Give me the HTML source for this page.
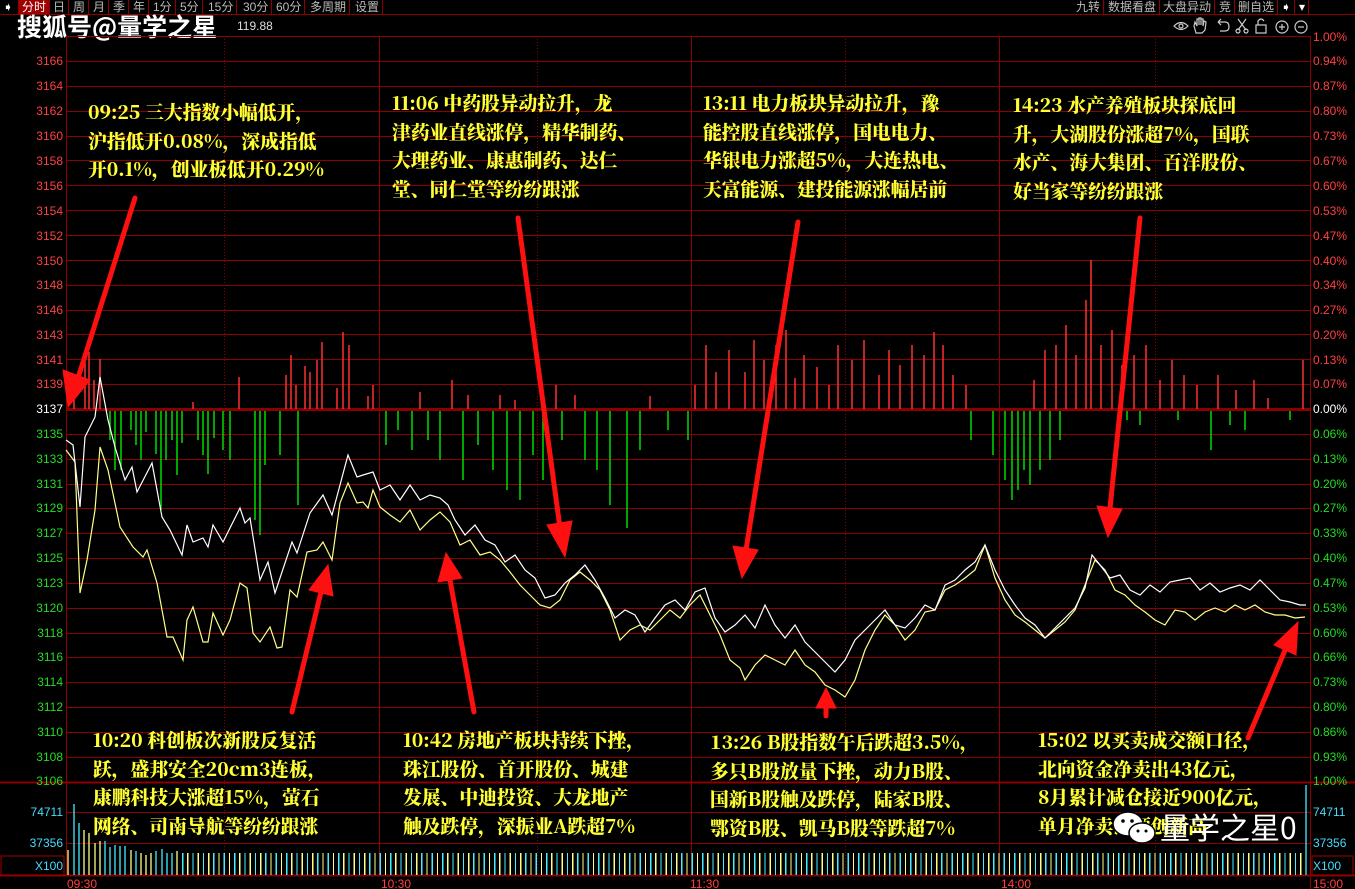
<!DOCTYPE html>
<html><head><meta charset="utf-8"><style>
html,body{margin:0;padding:0;background:#000;width:1355px;height:889px;overflow:hidden}
body{position:relative;font-family:"Liberation Sans","Noto Sans CJK SC",sans-serif}
.tb{position:absolute;top:0;left:0;width:1355px;height:14px;border-bottom:1px solid #8b0000}
.tb span{position:absolute;top:0;height:14px;font-size:12px;line-height:14px;color:#bbb;border-right:1px solid #8b0000;padding:0 3px}
.ann{position:absolute;color:#ffff33;font-family:"Noto Serif CJK SC","Liberation Serif",serif;font-weight:900;font-size:18.8px;line-height:28.5px;white-space:nowrap}
.ly{position:absolute;right:1292px;font-size:12px;line-height:12px;text-align:right}
.ry{position:absolute;left:1313px;font-size:12px;line-height:12px}
</style></head><body>
<div class="tb">
<span style="left:0;width:12px;color:#fff">➧</span>
<span style="left:19px;background:#a00000;color:#fff">分时</span>
<span style="left:50px">日</span><span style="left:70px">周</span><span style="left:90px">月</span><span style="left:110px">季</span><span style="left:130px">年</span><span style="left:150px">1分</span><span style="left:177px">5分</span><span style="left:205px">15分</span><span style="left:240px">30分</span><span style="left:273px">60分</span><span style="left:307px">多周期</span><span style="left:352px">设置</span>
<span style="left:1073px">九转</span><span style="left:1105px">数据看盘</span><span style="left:1160px">大盘异动</span><span style="left:1216px">竞</span><span style="left:1235px">删自选</span><span style="left:1278px;color:#fff">➧</span><span style="left:1296px;color:#fff">▾</span>
</div>
<div style="position:absolute;left:17px;top:12px;color:#fff;font-size:25px;font-weight:bold;line-height:28px;font-family:'Noto Sans CJK SC',sans-serif">搜狐号@量学之星</div>
<div style="position:absolute;left:237px;top:19px;color:#ddd;font-size:12px">119.88</div>
<svg style="position:absolute;left:0;top:0" width="1355" height="889">
<g stroke="#8b0000" stroke-width="1">
<line x1="66" y1="36.5" x2="1310" y2="36.5"/>
<line x1="66" y1="61.5" x2="1310" y2="61.5"/><line x1="66" y1="86.5" x2="1310" y2="86.5"/><line x1="66" y1="111.5" x2="1310" y2="111.5"/><line x1="66" y1="136.5" x2="1310" y2="136.5"/><line x1="66" y1="160.5" x2="1310" y2="160.5"/><line x1="66" y1="185.5" x2="1310" y2="185.5"/><line x1="66" y1="210.5" x2="1310" y2="210.5"/><line x1="66" y1="235.5" x2="1310" y2="235.5"/><line x1="66" y1="260.5" x2="1310" y2="260.5"/><line x1="66" y1="285.5" x2="1310" y2="285.5"/><line x1="66" y1="310.5" x2="1310" y2="310.5"/><line x1="66" y1="334.5" x2="1310" y2="334.5"/><line x1="66" y1="359.5" x2="1310" y2="359.5"/><line x1="66" y1="384.5" x2="1310" y2="384.5"/>
<line x1="66" y1="434.5" x2="1310" y2="434.5"/><line x1="66" y1="459.5" x2="1310" y2="459.5"/><line x1="66" y1="484.5" x2="1310" y2="484.5"/><line x1="66" y1="508.5" x2="1310" y2="508.5"/><line x1="66" y1="533.5" x2="1310" y2="533.5"/><line x1="66" y1="558.5" x2="1310" y2="558.5"/><line x1="66" y1="583.5" x2="1310" y2="583.5"/><line x1="66" y1="608.5" x2="1310" y2="608.5"/><line x1="66" y1="633.5" x2="1310" y2="633.5"/><line x1="66" y1="657.5" x2="1310" y2="657.5"/><line x1="66" y1="682.5" x2="1310" y2="682.5"/><line x1="66" y1="707.5" x2="1310" y2="707.5"/><line x1="66" y1="732.5" x2="1310" y2="732.5"/><line x1="66" y1="757.5" x2="1310" y2="757.5"/>
<line x1="0" y1="782.5" x2="1355" y2="782.5" stroke-width="2"/>
<line x1="66" y1="812.5" x2="1310" y2="812.5"/><line x1="66" y1="843.5" x2="1310" y2="843.5"/>
<line x1="0" y1="875.5" x2="1355" y2="875.5" stroke-width="2"/>
<line x1="66.5" y1="36" x2="66.5" y2="876"/><line x1="379.5" y1="36" x2="379.5" y2="876"/><line x1="691.5" y1="36" x2="691.5" y2="876"/><line x1="999.5" y1="36" x2="999.5" y2="876"/><line x1="1310.5" y1="36" x2="1310.5" y2="889"/>
<g stroke-dasharray="1,2"><line x1="224.5" y1="36" x2="224.5" y2="876"/><line x1="537.5" y1="36" x2="537.5" y2="876"/><line x1="845.5" y1="36" x2="845.5" y2="876"/><line x1="1155.5" y1="36" x2="1155.5" y2="876"/></g>
<line x1="66" y1="409.5" x2="1310" y2="409.5" stroke-width="3"/>
</g>
<g stroke="#ff3030" stroke-width="1.5">
<line x1="74" y1="409" x2="74" y2="385"/><line x1="85" y1="409" x2="85" y2="362"/><line x1="89" y1="409" x2="89" y2="352"/><line x1="94" y1="409" x2="94" y2="380"/><line x1="100" y1="409" x2="100" y2="359"/><line x1="193" y1="409" x2="193" y2="402"/><line x1="239" y1="409" x2="239" y2="377"/><line x1="286" y1="409" x2="286" y2="375"/><line x1="291" y1="409" x2="291" y2="355"/><line x1="296" y1="409" x2="296" y2="385"/><line x1="305" y1="409" x2="305" y2="366"/><line x1="310" y1="409" x2="310" y2="372"/><line x1="317" y1="409" x2="317" y2="360"/><line x1="322" y1="409" x2="322" y2="342"/><line x1="337" y1="409" x2="337" y2="388"/><line x1="343" y1="409" x2="343" y2="332"/><line x1="349" y1="409" x2="349" y2="345"/><line x1="368" y1="409" x2="368" y2="396"/><line x1="373" y1="409" x2="373" y2="385"/><line x1="420" y1="409" x2="420" y2="392"/><line x1="452" y1="409" x2="452" y2="380"/><line x1="468" y1="409" x2="468" y2="395"/><line x1="500" y1="409" x2="500" y2="395"/><line x1="515" y1="409" x2="515" y2="400"/><line x1="556" y1="409" x2="556" y2="385"/><line x1="575" y1="409" x2="575" y2="395"/><line x1="650" y1="409" x2="650" y2="396"/><line x1="695" y1="409" x2="695" y2="385"/><line x1="706" y1="409" x2="706" y2="345"/><line x1="716" y1="409" x2="716" y2="372"/><line x1="729" y1="409" x2="729" y2="350"/><line x1="745" y1="409" x2="745" y2="372"/><line x1="754" y1="409" x2="754" y2="340"/><line x1="764" y1="409" x2="764" y2="360"/><line x1="776" y1="409" x2="776" y2="345"/><line x1="786" y1="409" x2="786" y2="330"/><line x1="795" y1="409" x2="795" y2="378"/><line x1="804" y1="409" x2="804" y2="355"/><line x1="817" y1="409" x2="817" y2="367"/><line x1="829" y1="409" x2="829" y2="385"/><line x1="838" y1="409" x2="838" y2="345"/><line x1="852" y1="409" x2="852" y2="360"/><line x1="864" y1="409" x2="864" y2="340"/><line x1="879" y1="409" x2="879" y2="375"/><line x1="889" y1="409" x2="889" y2="350"/><line x1="900" y1="409" x2="900" y2="365"/><line x1="912" y1="409" x2="912" y2="345"/><line x1="924" y1="409" x2="924" y2="355"/><line x1="934" y1="409" x2="934" y2="332"/><line x1="943" y1="409" x2="943" y2="345"/><line x1="953" y1="409" x2="953" y2="375"/><line x1="966" y1="409" x2="966" y2="385"/><line x1="1034" y1="409" x2="1034" y2="380"/><line x1="1045" y1="409" x2="1045" y2="350"/><line x1="1056" y1="409" x2="1056" y2="345"/><line x1="1066" y1="409" x2="1066" y2="325"/><line x1="1076" y1="409" x2="1076" y2="355"/><line x1="1086" y1="409" x2="1086" y2="300"/><line x1="1091" y1="409" x2="1091" y2="260"/><line x1="1101" y1="409" x2="1101" y2="345"/><line x1="1112" y1="409" x2="1112" y2="330"/><line x1="1122" y1="409" x2="1122" y2="365"/><line x1="1134" y1="409" x2="1134" y2="355"/><line x1="1146" y1="409" x2="1146" y2="345"/><line x1="1160" y1="409" x2="1160" y2="380"/><line x1="1172" y1="409" x2="1172" y2="360"/><line x1="1184" y1="409" x2="1184" y2="375"/><line x1="1197" y1="409" x2="1197" y2="385"/><line x1="1218" y1="409" x2="1218" y2="375"/><line x1="1236" y1="409" x2="1236" y2="390"/><line x1="1254" y1="409" x2="1254" y2="380"/><line x1="1268" y1="409" x2="1268" y2="398"/><line x1="1303" y1="409" x2="1303" y2="360"/>
</g>
<g stroke="#00dd00" stroke-width="1.5">
<line x1="110" y1="411" x2="110" y2="440"/><line x1="115" y1="411" x2="115" y2="470"/><line x1="121" y1="411" x2="121" y2="470"/><line x1="131" y1="411" x2="131" y2="430"/><line x1="136" y1="411" x2="136" y2="445"/><line x1="141" y1="411" x2="141" y2="460"/><line x1="146" y1="411" x2="146" y2="432"/><line x1="156" y1="411" x2="156" y2="454"/><line x1="161" y1="411" x2="161" y2="510"/><line x1="166" y1="411" x2="166" y2="460"/><line x1="172" y1="411" x2="172" y2="440"/><line x1="177" y1="411" x2="177" y2="475"/><line x1="182" y1="411" x2="182" y2="443"/><line x1="198" y1="411" x2="198" y2="440"/><line x1="203" y1="411" x2="203" y2="455"/><line x1="208" y1="411" x2="208" y2="474"/><line x1="214" y1="411" x2="214" y2="438"/><line x1="223" y1="411" x2="223" y2="450"/><line x1="230" y1="411" x2="230" y2="460"/><line x1="255" y1="411" x2="255" y2="520"/><line x1="260" y1="411" x2="260" y2="535"/><line x1="265" y1="411" x2="265" y2="465"/><line x1="280" y1="411" x2="280" y2="455"/><line x1="298" y1="411" x2="298" y2="505"/><line x1="386" y1="411" x2="386" y2="445"/><line x1="398" y1="411" x2="398" y2="430"/><line x1="412" y1="411" x2="412" y2="450"/><line x1="428" y1="411" x2="428" y2="440"/><line x1="440" y1="411" x2="440" y2="460"/><line x1="463" y1="411" x2="463" y2="480"/><line x1="478" y1="411" x2="478" y2="445"/><line x1="493" y1="411" x2="493" y2="470"/><line x1="507" y1="411" x2="507" y2="490"/><line x1="520" y1="411" x2="520" y2="500"/><line x1="533" y1="411" x2="533" y2="455"/><line x1="543" y1="411" x2="543" y2="480"/><line x1="562" y1="411" x2="562" y2="440"/><line x1="585" y1="411" x2="585" y2="460"/><line x1="597" y1="411" x2="597" y2="470"/><line x1="610" y1="411" x2="610" y2="505"/><line x1="627" y1="411" x2="627" y2="528"/><line x1="640" y1="411" x2="640" y2="450"/><line x1="668" y1="411" x2="668" y2="430"/><line x1="688" y1="411" x2="688" y2="440"/><line x1="971" y1="411" x2="971" y2="440"/><line x1="993" y1="411" x2="993" y2="455"/><line x1="1005" y1="411" x2="1005" y2="480"/><line x1="1012" y1="411" x2="1012" y2="500"/><line x1="1018" y1="411" x2="1018" y2="490"/><line x1="1024" y1="411" x2="1024" y2="470"/><line x1="1030" y1="411" x2="1030" y2="485"/><line x1="1040" y1="411" x2="1040" y2="470"/><line x1="1050" y1="411" x2="1050" y2="460"/><line x1="1060" y1="411" x2="1060" y2="440"/><line x1="1127" y1="411" x2="1127" y2="420"/><line x1="1140" y1="411" x2="1140" y2="425"/><line x1="1178" y1="411" x2="1178" y2="420"/><line x1="1211" y1="411" x2="1211" y2="450"/><line x1="1230" y1="411" x2="1230" y2="425"/><line x1="1245" y1="411" x2="1245" y2="430"/><line x1="1290" y1="411" x2="1290" y2="420"/>
</g>
<polyline fill="none" stroke="#ffff88" stroke-width="1.2" points="66,450 75,462 80,593 87,560 95,510 100,447 108,470 120,527 133,547 143,557 147,550 157,583 167,637 173,637 183,660 187,620 193,607 203,642 208,642 213,613 223,635 230,620 240,583 247,588 253,633 260,642 270,627 277,648 282,647 290,590 297,597 307,552 317,550 323,542 332,560 340,503 348,483 357,503 363,502 368,508 373,490 380,507 390,515 400,522 410,510 420,530 430,520 440,512 450,522 460,545 470,540 480,555 490,552 500,560 510,572 520,585 530,595 540,605 550,608 560,600 570,580 580,572 590,580 600,590 610,610 620,640 630,630 640,625 650,630 660,620 670,610 680,618 690,605 700,595 710,615 720,635 730,660 740,668 745,680 755,665 765,655 775,660 785,665 795,650 805,665 815,672 825,685 835,690 845,697 855,680 865,650 875,630 885,615 895,625 905,640 915,630 925,612 935,610 945,590 955,585 965,578 975,570 985,545 995,578 1005,600 1015,615 1025,622 1035,630 1045,638 1055,630 1065,622 1075,610 1085,585 1095,560 1105,570 1115,590 1125,595 1135,605 1145,612 1155,620 1165,625 1175,610 1185,612 1195,620 1205,612 1215,608 1225,612 1235,605 1245,610 1255,605 1265,612 1275,615 1285,615 1295,618 1305,617"/>
<polyline fill="none" stroke="#ffffff" stroke-width="1.2" points="66,440 73,445 80,507 85,437 95,417 100,377 108,420 115,447 125,480 132,467 137,492 152,463 162,517 170,530 182,555 187,525 193,542 203,538 208,547 213,525 223,542 240,508 245,523 250,518 260,580 268,562 275,593 292,542 297,553 310,513 323,495 332,515 348,455 357,477 363,475 373,472 380,490 390,485 400,500 410,485 420,500 430,495 440,498 448,505 455,520 465,535 475,525 485,540 495,545 505,562 515,555 525,570 535,578 545,598 555,595 565,583 575,575 585,565 595,580 605,598 615,618 625,610 635,615 645,632 655,618 665,605 675,600 685,610 695,592 705,588 715,618 725,632 735,625 745,615 755,628 765,605 775,625 785,638 795,625 805,642 815,652 825,662 835,672 845,660 855,640 865,630 875,620 885,610 895,625 905,628 915,618 925,605 935,610 945,585 955,580 965,570 975,562 985,545 995,570 1005,590 1015,605 1025,618 1035,625 1045,638 1055,628 1065,618 1075,608 1085,588 1092,555 1100,565 1110,578 1120,575 1130,590 1140,595 1150,585 1160,592 1170,582 1180,580 1190,578 1200,590 1210,583 1220,592 1230,588 1240,585 1250,590 1260,580 1270,590 1280,600 1290,602 1300,605 1306,605"/>
<g fill="#ff1010" stroke="#ff1010" stroke-width="5" stroke-linecap="round">
<line x1="135" y1="198" x2="78" y2="378"/><polygon points="68,407 63,370 90,380" stroke-width="1"/>
<line x1="518" y1="218" x2="560" y2="528"/><polygon points="565,557 547,525 572,521" stroke-width="1"/>
<line x1="798" y1="222" x2="746" y2="550"/><polygon points="742,578 733,546 758,550" stroke-width="1"/>
<line x1="1140" y1="218" x2="1110" y2="508"/><polygon points="1108,537 1097,506 1122,509" stroke-width="1"/>
<line x1="292" y1="712" x2="321" y2="592"/><polygon points="328,565 333,596 309,590" stroke-width="1"/>
<line x1="474" y1="712" x2="450" y2="580"/><polygon points="446,553 462,578 438,582" stroke-width="1"/>
<line x1="826" y1="716" x2="826" y2="705"/><polygon points="826,688 836,708 816,708" stroke-width="1"/>
<line x1="1248" y1="738" x2="1286" y2="648"/><polygon points="1298,622 1296,655 1274,645" stroke-width="1"/>
</g>
<g stroke-width="1.3">
<line x1="68" y1="875" x2="68" y2="850" stroke="#ffff88"/>
<line x1="74" y1="875" x2="74" y2="804" stroke="#44eeff"/><line x1="79" y1="875" x2="79" y2="823" stroke="#44eeff"/><line x1="84" y1="875" x2="84" y2="830" stroke="#ffff88"/><line x1="89" y1="875" x2="89" y2="833" stroke="#ffff88"/><line x1="95" y1="875" x2="95" y2="843" stroke="#ffff88"/><line x1="100" y1="875" x2="100" y2="841" stroke="#ffff88"/><line x1="105" y1="875" x2="105" y2="841" stroke="#44eeff"/><line x1="110" y1="875" x2="110" y2="847" stroke="#44eeff"/><line x1="115" y1="875" x2="115" y2="845" stroke="#44eeff"/><line x1="120" y1="875" x2="120" y2="846" stroke="#44eeff"/><line x1="125" y1="875" x2="125" y2="846" stroke="#44eeff"/><line x1="131" y1="875" x2="131" y2="850" stroke="#ffff88"/><line x1="136" y1="875" x2="136" y2="851" stroke="#44eeff"/><line x1="141" y1="875" x2="141" y2="853" stroke="#ffff88"/><line x1="146" y1="875" x2="146" y2="855" stroke="#ffff88"/><line x1="151" y1="875" x2="151" y2="853" stroke="#ffff88"/><line x1="156" y1="875" x2="156" y2="851" stroke="#44eeff"/><line x1="162" y1="875" x2="162" y2="849" stroke="#44eeff"/><line x1="167" y1="875" x2="167" y2="853" stroke="#44eeff"/><line x1="172" y1="875" x2="172" y2="853" stroke="#44eeff"/><line x1="177" y1="875" x2="177" y2="851" stroke="#ffff88"/>
<line x1="1306" y1="875" x2="1306" y2="785" stroke="#44eeff"/>
</g>
<rect x="1" y="856" width="63" height="19" fill="none" stroke="#a00000"/>
<rect x="1312" y="856" width="41" height="19" fill="none" stroke="#a00000"/>
<g fill="none" stroke="#ccc" stroke-width="1.2">
<path d="M1174 26 Q1181 19 1188 26 Q1181 33 1174 26Z"/><circle cx="1181" cy="26" r="2"/>
<path d="M1196 33 L1194 26 L1195 22 L1197 26 L1197 19 L1199 19 L1199 25 L1199 18 L1201 18 L1201 25 L1201 19 L1203 19 L1203 26 L1204 21 L1206 22 L1205 30 L1202 33Z"/>
<path d="M1218 22 L1225 22 Q1229 22 1229 27 Q1229 31 1225 31 L1220 31 M1218 22 L1221 19 M1218 22 L1221 25"/>
<path d="M1238 19 L1246 30 M1246 19 L1238 30"/><circle cx="1238" cy="31" r="2"/><circle cx="1246" cy="31" r="2"/>
<rect x="1256" y="25" width="10" height="8"/><path d="M1258 25 L1258 21 Q1261 17 1264 21"/>
<circle cx="1282" cy="27" r="6"/><path d="M1279 27 L1285 27 M1282 24 L1282 30"/>
<circle cx="1301" cy="27" r="6"/><path d="M1298 27 L1304 27"/>
</g>
</svg>
<div style="position:absolute;left:182px;top:853px;width:1120px;height:22px;background:repeating-linear-gradient(90deg,#44eeff 0 1.3px,transparent 1.3px 5.2px,#ffff88 5.2px 6.5px,transparent 6.5px 10.4px)"></div>
<div class="ly" style="top:55px;color:#ff4040">3166</div><div class="ly" style="top:80px;color:#ff4040">3164</div><div class="ly" style="top:105px;color:#ff4040">3162</div><div class="ly" style="top:130px;color:#ff4040">3160</div><div class="ly" style="top:155px;color:#ff4040">3158</div><div class="ly" style="top:180px;color:#ff4040">3156</div><div class="ly" style="top:205px;color:#ff4040">3154</div><div class="ly" style="top:230px;color:#ff4040">3152</div><div class="ly" style="top:255px;color:#ff4040">3150</div><div class="ly" style="top:279px;color:#ff4040">3148</div><div class="ly" style="top:304px;color:#ff4040">3146</div><div class="ly" style="top:329px;color:#ff4040">3143</div><div class="ly" style="top:354px;color:#ff4040">3141</div><div class="ly" style="top:378px;color:#ff4040">3139</div><div class="ly" style="top:403px;color:#fff">3137</div>
<div class="ly" style="top:428px;color:#22dd22">3135</div><div class="ly" style="top:453px;color:#22dd22">3133</div><div class="ly" style="top:478px;color:#22dd22">3131</div><div class="ly" style="top:502px;color:#22dd22">3129</div><div class="ly" style="top:527px;color:#22dd22">3127</div><div class="ly" style="top:552px;color:#22dd22">3125</div><div class="ly" style="top:577px;color:#22dd22">3123</div><div class="ly" style="top:602px;color:#22dd22">3120</div><div class="ly" style="top:627px;color:#22dd22">3118</div><div class="ly" style="top:651px;color:#22dd22">3116</div><div class="ly" style="top:676px;color:#22dd22">3114</div><div class="ly" style="top:701px;color:#22dd22">3112</div><div class="ly" style="top:726px;color:#22dd22">3110</div><div class="ly" style="top:751px;color:#22dd22">3108</div><div class="ly" style="top:775px;color:#22dd22">3106</div>
<div class="ly" style="top:806px;color:#44ddff">74711</div><div class="ly" style="top:837px;color:#44ddff">37356</div><div class="ly" style="top:860px;color:#44ddff">X100</div>
<div class="ry" style="top:31px;color:#ff4040">1.00%</div><div class="ry" style="top:55px;color:#ff4040">0.94%</div><div class="ry" style="top:80px;color:#ff4040">0.87%</div><div class="ry" style="top:105px;color:#ff4040">0.80%</div><div class="ry" style="top:130px;color:#ff4040">0.73%</div><div class="ry" style="top:155px;color:#ff4040">0.67%</div><div class="ry" style="top:180px;color:#ff4040">0.60%</div><div class="ry" style="top:205px;color:#ff4040">0.53%</div><div class="ry" style="top:230px;color:#ff4040">0.47%</div><div class="ry" style="top:255px;color:#ff4040">0.40%</div><div class="ry" style="top:279px;color:#ff4040">0.34%</div><div class="ry" style="top:304px;color:#ff4040">0.27%</div><div class="ry" style="top:329px;color:#ff4040">0.20%</div><div class="ry" style="top:354px;color:#ff4040">0.13%</div><div class="ry" style="top:378px;color:#ff4040">0.07%</div><div class="ry" style="top:403px;color:#fff">0.00%</div>
<div class="ry" style="top:428px;color:#22dd22">0.06%</div><div class="ry" style="top:453px;color:#22dd22">0.13%</div><div class="ry" style="top:478px;color:#22dd22">0.20%</div><div class="ry" style="top:502px;color:#22dd22">0.27%</div><div class="ry" style="top:527px;color:#22dd22">0.33%</div><div class="ry" style="top:552px;color:#22dd22">0.40%</div><div class="ry" style="top:577px;color:#22dd22">0.47%</div><div class="ry" style="top:602px;color:#22dd22">0.53%</div><div class="ry" style="top:627px;color:#22dd22">0.60%</div><div class="ry" style="top:651px;color:#22dd22">0.66%</div><div class="ry" style="top:676px;color:#22dd22">0.73%</div><div class="ry" style="top:701px;color:#22dd22">0.80%</div><div class="ry" style="top:726px;color:#22dd22">0.86%</div><div class="ry" style="top:751px;color:#22dd22">0.93%</div><div class="ry" style="top:775px;color:#22dd22">1.00%</div>
<div class="ry" style="top:806px;color:#44ddff">74711</div><div class="ry" style="top:837px;color:#44ddff">37356</div><div class="ry" style="top:860px;color:#44ddff">X100</div>
<div style="position:absolute;top:877px;left:67px;color:#ff4040;font-size:12px">09:30</div>
<div style="position:absolute;top:877px;left:381px;color:#ff4040;font-size:12px">10:30</div>
<div style="position:absolute;top:877px;left:690px;color:#ff4040;font-size:12px">11:30</div>
<div style="position:absolute;top:877px;left:1001px;color:#ff4040;font-size:12px">14:00</div>
<div style="position:absolute;top:877px;left:1313px;color:#ff4040;font-size:12px">15:00</div>
<div class="ann" style="left:88px;top:98px">09:25 三大指数小幅低开，<br>沪指低开0.08%，深成指低<br>开0.1%，创业板低开0.29%</div>
<div class="ann" style="left:392px;top:89px">11:06 中药股异动拉升，龙<br>津药业直线涨停，精华制药、<br>大理药业、康惠制药、达仁<br>堂、同仁堂等纷纷跟涨</div>
<div class="ann" style="left:703px;top:89px">13:11 电力板块异动拉升，豫<br>能控股直线涨停，国电电力、<br>华银电力涨超5%，大连热电、<br>天富能源、建投能源涨幅居前</div>
<div class="ann" style="left:1013px;top:91px">14:23 水产养殖板块探底回<br>升，大湖股份涨超7%，国联<br>水产、海大集团、百洋股份、<br>好当家等纷纷跟涨</div>
<div class="ann" style="left:93px;top:726px">10:20 科创板次新股反复活<br>跃，盛邦安全20cm3连板，<br>康鹏科技大涨超15%，萤石<br>网络、司南导航等纷纷跟涨</div>
<div class="ann" style="left:403px;top:726px">10:42 房地产板块持续下挫，<br>珠江股份、首开股份、城建<br>发展、中迪投资、大龙地产<br>触及跌停，深振业A跌超7%</div>
<div class="ann" style="left:710px;top:728px">13:26 B股指数午后跌超3.5%，<br>多只B股放量下挫，动力B股、<br>国新B股触及跌停，陆家B股、<br>鄂资B股、凯马B股等跌超7%</div>
<div class="ann" style="left:1038px;top:726px">15:02 以买卖成交额口径，<br>北向资金净卖出43亿元，<br>8月累计减仓接近900亿元，<br>单月净卖出额创新高</div>
<svg style="position:absolute;left:1110px;top:806px" width="50" height="44"><g fill="#fff" stroke="#000" stroke-width="1.5"><ellipse cx="18" cy="18" rx="15" ry="12"/><ellipse cx="32" cy="27" rx="13" ry="10"/></g><g fill="#000"><circle cx="13" cy="15" r="1.8"/><circle cx="22" cy="15" r="1.8"/><circle cx="28" cy="25" r="1.5"/><circle cx="36" cy="25" r="1.5"/></g></svg>
<div style="position:absolute;left:1160px;top:808px;color:#fff;font-size:30px;line-height:36px;font-family:'Noto Sans CJK SC',sans-serif">量学之星0</div>
</body></html>
